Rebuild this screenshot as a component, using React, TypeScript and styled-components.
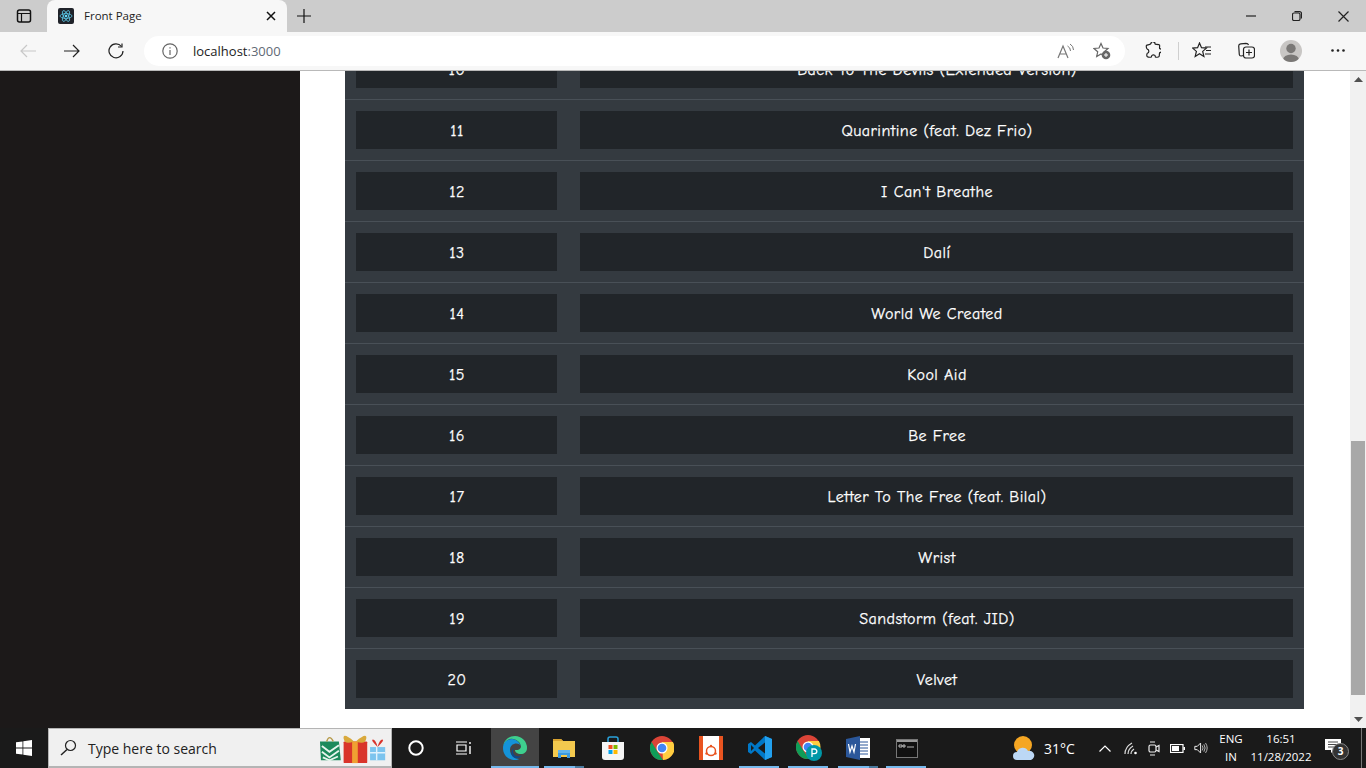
import React from "react";
import styled, { createGlobalStyle } from "styled-components";

const Global = createGlobalStyle`
  html, body { margin: 0; padding: 0; height: 768px; overflow: hidden; background: #fff; }
  * { box-sizing: border-box; }
  svg { display: block; }
`;
const UI = `"Open Sans", "Noto Sans", sans-serif`;
const TRACK = `"Comic Sans MS", "Comic Neue", Lato, sans-serif`;

const Screen = styled.div`width:1366px;height:768px;display:flex;flex-direction:column;overflow:hidden;`;
const TabStrip = styled.div`height:32px;background:#ccc;display:flex;align-items:stretch;flex:none;`;
const SideBtn = styled.div`width:47px;display:flex;align-items:center;justify-content:center;`;
const Tab = styled.div`width:240px;background:#f7f7f7;border-radius:8px 8px 0 0;display:flex;align-items:center;padding:0 11px;font:11.5px ${UI};color:#1e1e1e;`;
const Favicon = styled.div`width:16px;height:16px;background:#20232a;border-radius:2px;display:flex;align-items:center;justify-content:center;margin-right:10px;`;
const TabTitle = styled.span`flex:1;margin-top:-2px;`;
const NewTab = styled.div`width:34px;display:flex;align-items:center;justify-content:center;`;
const Spacer = styled.div`flex:1;`;
const WinBtn = styled.div`width:46px;display:flex;align-items:center;justify-content:center;`;
const Toolbar = styled.div`height:39px;background:#f7f7f7;border-bottom:1px solid #b9b9b9;display:flex;align-items:center;flex:none;padding-left:6px;padding-bottom:1px;`;
const NavBtn = styled.div`width:44px;height:32px;display:flex;align-items:center;justify-content:center;`;
const Pill = styled.div`margin-left:6px;width:981px;height:30px;background:#fff;border-radius:15px;display:flex;align-items:center;padding:0 5px 0 18px;`;
const Url = styled.span`margin-left:15px;font:13px ${UI};color:#222;flex:1;`;
const UrlPort = styled.span`color:#5f6a75;`;
const PillBtn = styled.div`width:36px;display:flex;justify-content:center;`;
const TBtn = styled.div<{ $w: number; $mr?: number; $ml?: number }>`width:${p => p.$w}px;margin-right:${p => p.$mr ?? 0}px;margin-left:${p => p.$ml ?? 0}px;display:flex;align-items:center;justify-content:center;`;
const Divider = styled.div`width:1px;height:18px;background:#cfcfcf;margin:0 10px 0 11px;`;
const Avatar = styled.div`width:22px;height:22px;border-radius:50%;background:#c8c6c4;overflow:hidden;`;

const Viewport = styled.div`height:657px;display:flex;flex:none;overflow:hidden;`;
const LeftPane = styled.div`width:300px;background:#1c1919;flex:none;`;
const Main = styled.main`width:1050px;background:#fff;padding-left:45px;flex:none;`;
const Table = styled.div`width:959px;background:#343a40;margin-top:-33px;`;
const Row = styled.div`height:61px;border-top:1px solid #495057;padding:11px 11px;display:grid;grid-template-columns:201px 713px;column-gap:23px;`;
const Cell = styled.div`height:38px;background:#212529;color:#fff;display:flex;align-items:center;justify-content:center;font:16px ${TRACK};letter-spacing:.45px;padding:2px 0 0 1px;-webkit-text-stroke:.25px #fff;`;
const Scrollbar = styled.div`width:16px;background:#f1f1f1;display:flex;flex-direction:column;align-items:center;flex:none;`;
const ScrollArrow = styled.div`height:17px;flex:none;display:flex;align-items:center;justify-content:center;`;
const Thumb = styled.div`width:14px;height:254px;background:#a8a8a8;margin-top:353px;flex:none;`;

const Taskbar = styled.div`height:40px;background:#1a1a1a;display:flex;align-items:stretch;flex:none;color:#fff;font-family:${UI};`;
const Start = styled.div`width:48px;flex:none;display:flex;align-items:center;justify-content:center;`;
const Search = styled.div`width:344px;flex:none;background:#f0f0f0;border:1px solid #b4b4b4;border-bottom-width:2px;display:flex;align-items:center;padding:0 3px 0 11px;font-size:14px;color:#222;`;
const SearchText = styled.span`margin:2px 0 0 11px;flex:1;`;
const Slot = styled.div<{ $w?: number; $active?: boolean }>`width:${p => p.$w ?? 49}px;position:relative;display:flex;align-items:center;justify-content:center;background:${p => (p.$active ? "#444" : "transparent")};flex:none;`;
const TaskView = styled(Slot)`padding-right:5px;`;
const Under = styled.div<{ $w: number; $extra?: number; $l?: number }>`position:absolute;bottom:0;left:${p => p.$l ?? 4}px;width:${p => p.$w}px;height:2px;background:#76b9ed;box-shadow:${p => (p.$extra ? `${p.$extra}px 0 0 #4a7a9e` : "none")};`;
const Temp = styled.span`font-size:14px;margin-left:8px;`;
const Weather = styled.div`margin-left:81px;width:83px;flex:none;display:flex;align-items:center;`;
const TrayIcon = styled.div<{ $w: number }>`width:${p => p.$w}px;display:flex;align-items:center;justify-content:center;flex:none;`;
const TwoLine = styled.div<{ $w: number }>`width:${p => p.$w}px;flex:none;display:flex;flex-direction:column;align-items:center;justify-content:center;font-size:11.5px;line-height:18px;white-space:nowrap;`;
const Notif = styled.div`width:45px;position:relative;display:flex;align-items:center;justify-content:center;flex:none;`;
const NotifBell = styled.svg`margin:-3px 0 0 5px;`;
const NotifBadge = styled.div`position:absolute;left:24px;top:15px;width:17px;height:17px;border-radius:50%;background:#333;border:1px solid #888;font:bold 10px/15px ${UI};text-align:center;`;
const ShowDesk = styled.div`width:1px;background:#777;margin-left:8px;flex:none;`;

const tracks: [number, string][] = [
  [10, "Back To The Devils (Extended Version)"],
  [11, "Quarintine (feat. Dez Frio)"],
  [12, "I Can't Breathe"],
  [13, "Dalí"],
  [14, "World We Created"],
  [15, "Kool Aid"],
  [16, "Be Free"],
  [17, "Letter To The Free (feat. Bilal)"],
  [18, "Wrist"],
  [19, "Sandstorm (feat. JID)"],
  [20, "Velvet"],
];

const S = { fill: "none", stroke: "currentColor", strokeWidth: 1.2 } as const;

export default function App() {
  return (
    <Screen>
      <Global />
      <TabStrip>
        <SideBtn>
          <svg width="16" height="16" viewBox="0 0 16 16" color="#111"><rect x="1.5" y="2" width="13" height="12" rx="2" {...S} strokeWidth="1.5" /><path d="M2 5.5h12M5.5 5.5V14" {...S} /></svg>
        </SideBtn>
        <Tab>
          <Favicon>
            <svg width="14" height="14" viewBox="0 0 14 14"><circle cx="7" cy="7" r="1.3" fill="#61dafb" /><g fill="none" stroke="#61dafb" strokeWidth=".7"><ellipse cx="7" cy="7" rx="6" ry="2.4" /><ellipse cx="7" cy="7" rx="6" ry="2.4" transform="rotate(60 7 7)" /><ellipse cx="7" cy="7" rx="6" ry="2.4" transform="rotate(120 7 7)" /></g></svg>
          </Favicon>
          <TabTitle>Front Page</TabTitle>
          <svg width="10" height="10" viewBox="0 0 10 10" color="#111"><path d="M1 1l8 8M9 1l-8 8" {...S} strokeWidth="1.5" /></svg>
        </Tab>
        <NewTab>
          <svg width="14" height="14" viewBox="0 0 14 14" color="#111"><path d="M7 0v14M0 7h14" {...S} /></svg>
        </NewTab>
        <Spacer />
        <WinBtn><svg width="10" height="2" viewBox="0 0 10 2" color="#222"><path d="M0 1h10" {...S} /></svg></WinBtn>
        <WinBtn><svg width="10" height="10" viewBox="0 0 10 10" color="#222"><rect x=".5" y="2" width="7.5" height="7.5" rx="1.5" {...S} /><path d="M2.5 .6h5a2 2 0 0 1 2 2v5" {...S} /></svg></WinBtn>
        <WinBtn><svg width="11" height="11" viewBox="0 0 11 11" color="#222"><path d="M.5.5l10 10M10.5.5l-10 10" {...S} /></svg></WinBtn>
      </TabStrip>
      <Toolbar>
        <NavBtn><svg width="16" height="14" viewBox="0 0 16 14" color="#c8c8c8"><path d="M16 7H1M7 1L1 7l6 6" {...S} /></svg></NavBtn>
        <NavBtn><svg width="16" height="14" viewBox="0 0 16 14" color="#222"><path d="M0 7h15M9 1l6 6-6 6" {...S} /></svg></NavBtn>
        <NavBtn><svg width="16" height="16" viewBox="0 0 16 16" color="#222"><path d="M13.5 3.5A7 7 0 1 0 15 8" {...S} /><path d="M14 .5v3.5h-4" {...S} /></svg></NavBtn>
        <Pill>
          <svg width="16" height="16" viewBox="0 0 16 16" color="#666"><circle cx="8" cy="8" r="7.2" {...S} /><path d="M8 7v5M8 4.2v1.3" {...S} /></svg>
          <Url>localhost<UrlPort>:3000</UrlPort></Url>
          <PillBtn>
            <svg width="18" height="16" viewBox="0 0 18 16" color="#777"><path d="M1 15L6 3l5 12M3 11h6" {...S} /><path d="M10.500 3q3 1.500 3 5M13 1q3.500 2 3.500 6" {...S} strokeWidth="1" /></svg>
          </PillBtn>
          <PillBtn>
            <svg width="18" height="18" viewBox="0 0 18 18" color="#666"><path d="M8 1.500l2 4.500 5 .5-3.700 3.300 1 4.700L8 12l-4.300 2.500 1-4.700L1 6.500 6 6z" {...S} /><circle cx="13" cy="13" r="4.300" fill="#666" /><path d="M13 11v4M11 13h4" stroke="#fff" strokeWidth="1" /></svg>
          </PillBtn>
        </Pill>
        <TBtn $w={28} $ml={14}>
          <svg width="16" height="17" viewBox="0 0 16 17" color="#222"><path d="M6 1.500a2 2 0 0 1 4 .6c0 .6 4 0 4.500 1s-.4 3.300.2 3.600a2 2 0 0 1 0 4c-.6 0 0 3.300-.7 4s-3 .7-3.600.3a2 2 0 0 0-4-.2c-.4.600-3 .6-4 0s-.6-3-.1-3.500a2.200 2.200 0 0 0 0-4.200C1.500 7 1 4 1.500 3.300S5.500 3 6 1.500z" {...S} /></svg>
        </TBtn>
        <Divider />
        <TBtn $w={26} $mr={18}>
          <svg width="20" height="17" viewBox="0 0 20 17" color="#222"><path d="M7.500 1l2 4.700 5 .4-3.800 3.300 1.200 5L7.500 11.700 3.200 14.400l1.200-5L.6 6.100l5-.4z" {...S} /><path d="M13 5h6M14 8.500h5M13 12h6" {...S} /></svg>
        </TBtn>
        <TBtn $w={26} $mr={21}>
          <svg width="17" height="17" viewBox="0 0 17 17" color="#222"><path d="M6 13.500L3 14Q1.500 14 1.300 12.500L.7 4q0-2 2-2.200L8 1.300q2 0 2.500 1.700" {...S} /><rect x="5.500" y="5" width="11" height="11" rx="2.500" {...S} /><path d="M11 7.500v6M8 10.500h6" {...S} /></svg>
        </TBtn>
        <TBtn $w={22} $mr={26}>
          <Avatar><svg width="22" height="22" viewBox="0 0 22 22"><circle cx="11" cy="8.500" r="4.700" fill="#7a7876" /><ellipse cx="11" cy="20" rx="8" ry="5.500" fill="#7a7876" /></svg></Avatar>
        </TBtn>
        <TBtn $w={20}>
          <svg width="14" height="3" viewBox="0 0 14 3" fill="#222"><circle cx="1.500" cy="1.500" r="1.300" /><circle cx="7" cy="1.500" r="1.300" /><circle cx="12.500" cy="1.500" r="1.300" /></svg>
        </TBtn>
      </Toolbar>
      <Viewport>
        <LeftPane />
        <Main>
          <Table>
            {tracks.map(([n, t]) => (
              <Row key={n}>
                <Cell>{n}</Cell>
                <Cell>{t}</Cell>
              </Row>
            ))}
          </Table>
        </Main>
        <Scrollbar>
          <ScrollArrow><svg width="9" height="5" viewBox="0 0 9 5" fill="#505050"><path d="M4.500 0L9 5H0z" /></svg></ScrollArrow>
          <Thumb />
          <Spacer />
          <ScrollArrow><svg width="9" height="5" viewBox="0 0 9 5" fill="#505050"><path d="M0 0h9L4.500 5z" /></svg></ScrollArrow>
        </Scrollbar>
      </Viewport>
      <Taskbar>
        <Start>
          <svg width="16" height="16" viewBox="0 0 16 16" fill="#fff"><path d="M0 2.300l6.500-.9v6.200H0zM7.300 1.300L16 0v7.600H7.300zM0 8.400h6.500v6.200L0 13.700zM7.300 8.400H16V16l-8.700-1.300z" /></svg>
        </Start>
        <Search>
          <svg width="17" height="17" viewBox="0 0 17 17" color="#222"><circle cx="10.500" cy="6.500" r="5" {...S} /><path d="M7 10.500L1 16" {...S} strokeWidth="1.500" /></svg>
          <SearchText>Type here to search</SearchText>
          <svg width="68" height="34" viewBox="0 0 72 34">
            <path d="M0 10h20l2 20H1z" fill="#1c8a5c" /><path d="M2 15l8 6 10-7M2 21l8 6 10-7M3 27l7 3 9-4" stroke="#e8f5ee" strokeWidth="2" fill="none" />
            <path d="M7 10q3-8 7 0" stroke="#b59a4a" strokeWidth="1.500" fill="none" />
            <rect x="25" y="10" width="25" height="23" fill="#d9342b" rx="1" /><rect x="34" y="10" width="6" height="23" fill="#f0a032" />
            <path d="M36 10Q24 0 25 7t11 3zM38 10q12-10 11-3t-11 3z" fill="#d9a93c" />
            <rect x="53" y="16" width="16" height="14" fill="#7cc4ee" /><path d="M60 16v14M53 22h16" stroke="#dff2fd" strokeWidth="1.500" /><path d="M61 16q-8-8-5-8t5 8q8-8 5-8t-5 8z" fill="#d9342b" />
          </svg>
        </Search>
        <Slot $w={48}><svg width="16" height="16" viewBox="0 0 16 16"><circle cx="8" cy="8" r="6.700" fill="none" stroke="#fff" strokeWidth="2" /></svg></Slot>
        <TaskView $w={51}><svg width="17" height="16" viewBox="0 0 17 16" color="#fff"><path d="M1 2h11M1 14h11M2 5h9v6H2z" {...S} /><path d="M15 2v2M15 6v8" {...S} strokeWidth="1.400" /></svg></TaskView>
        <Slot $w={48} $active>
          <svg width="24" height="24" viewBox="0 0 24 24"><path d="M12 0a12 12 0 0 1 12 12c0 4-3 6-6 6-4 0-6-2-6-4 0 0 5 1 6-3C18 6 12 2 7 3 3 4 0 8 0 12 0 5 5 0 12 0z" fill="#3ecf8e" /><path d="M0 12C0 6 5 3 9 3c4 0 7 3 9 7-1-2-4-3-7-2-4 1-5 6-3 10 1 2 4 5 8 5-1 .6-2 1-4 1C5 24 0 19 0 12z" fill="#1493d9" /><path d="M11 12c-2 3-1 7 2 8 3 1 5 0 6-1-1 2-4 4-7 3-4-1-5-8-1-10z" fill="#0c4a8c" /></svg>
          <Under $w={48} $l={0} />
        </Slot>
        <Slot>
          <svg width="22" height="20" viewBox="0 0 22 20"><path d="M0 1h8l2 2h12v16H0z" fill="#f3c94e" /><path d="M0 1h8l2 2H0z" fill="#d9a22f" /><path d="M5 14h12v6h-3v-3H8v3H5z" fill="#3b9ae1" /><rect x="5" y="12" width="12" height="3" fill="#61b4ee" /></svg>
          <Under $w={31} $extra={9} $l={5} />
        </Slot>
        <Slot>
          <svg width="24" height="24" viewBox="0 0 24 24"><path d="M7 6V3q0-2 2-2h6q2 0 2 2v3" fill="none" stroke="#2aa3dc" strokeWidth="1.500" /><path d="M1 6h22v15q0 3-3 3H4q-3 0-3-3z" fill="#f5f5f5" /><rect x="7.500" y="9" width="4" height="4" fill="#f25022" /><rect x="12.500" y="9" width="4" height="4" fill="#7fba00" /><rect x="7.500" y="14" width="4" height="4" fill="#00a4ef" /><rect x="12.500" y="14" width="4" height="4" fill="#ffb900" /></svg>
        </Slot>
        <Slot>
          <svg width="24" height="24" viewBox="0 0 24 24"><circle cx="12" cy="12" r="12" fill="#db4437" /><path d="M12 6h10.900A12 12 0 0 1 13 24z" fill="#ffcd40" /><path d="M13 24A12 12 0 0 1 1.600 6L7 15l6 9z" fill="#0f9d58" /><circle cx="12" cy="12" r="5.500" fill="#fff" /><circle cx="12" cy="12" r="4.300" fill="#4285f4" /></svg>
        </Slot>
        <Slot>
          <svg width="24" height="24" viewBox="0 0 24 24"><rect width="24" height="24" fill="#fff" /><rect width="4" height="24" fill="#e95420" /><rect x="20" width="4" height="24" fill="#e95420" /><circle cx="12" cy="15" r="4.500" fill="none" stroke="#e95420" strokeWidth="1.500" /><circle cx="12" cy="10" r="1.200" fill="#e95420" /><circle cx="7.500" cy="17.500" r="1.200" fill="#e95420" /><circle cx="16.500" cy="17.500" r="1.200" fill="#e95420" /></svg>
        </Slot>
        <Slot>
          <svg width="24" height="24" viewBox="0 0 24 24"><path d="M17 0l7 3v18l-7 3L7 14.500 3 18l-3-2v-8l3-2 4 3.500z" fill="#0078c8" /><path d="M17 0l7 3v18l-7 3z" fill="#22a0ee" /><path d="M17 6.500L10 12l7 5.500z" fill="#1a1a1a" /><path d="M3 9v6l3-3z" fill="#1a1a1a" /></svg>
          <Under $w={40} $l={4} />
        </Slot>
        <Slot>
          <svg width="26" height="26" viewBox="0 0 26 26"><circle cx="12" cy="12" r="12" fill="#db4437" /><path d="M12 6h10.900A12 12 0 0 1 13 24z" fill="#ffcd40" /><path d="M13 24A12 12 0 0 1 1.600 6L7 15l6 9z" fill="#0f9d58" /><circle cx="12" cy="12" r="5.500" fill="#fff" /><circle cx="12" cy="12" r="4.300" fill="#4285f4" /><circle cx="18" cy="18" r="8" fill="#0097a7" /><path d="M16 22v-8h2.500a2.300 2.300 0 0 1 0 4.700H16" fill="none" stroke="#fff" strokeWidth="1.300" /></svg>
          <Under $w={40} $l={4} />
        </Slot>
        <Slot>
          <svg width="24" height="24" viewBox="0 0 24 24"><rect x="8" y="2" width="16" height="20" fill="#fff" /><path d="M13 6h9M13 9h9M13 12h9M13 15h9M13 18h9" stroke="#2b579a" /><path d="M0 3l14-3v24L0 21z" fill="#2b579a" /><path d="M2.500 8l1.500 8 2-6 2 6 1.500-8" fill="none" stroke="#fff" strokeWidth="1.200" /></svg>
          <Under $w={31} $extra={9} $l={5} />
        </Slot>
        <Slot>
          <svg width="22" height="19" viewBox="0 0 22 19"><rect x=".5" y=".5" width="21" height="18" fill="#111" stroke="#777" /><rect x="1" y="1" width="20" height="2" fill="#999" /><path d="M3 6h3v2H3zM7 6h2v2H7zM11 8h7" stroke="#ddd" strokeWidth=".8" fill="none" /></svg>
          <Under $w={40} $l={4} />
        </Slot>
        <Weather>
          <svg width="24" height="24" viewBox="0 0 24 24"><circle cx="11" cy="9" r="9" fill="#f5a623" /><path d="M5 24a4 4 0 0 1 0-8 6 6 0 0 1 11-1 4.500 4.500 0 0 1 3 9z" fill="#bcd8f5" /></svg>
          <Temp>31°C</Temp>
        </Weather>
        <TrayIcon $w={20}><svg width="12" height="7" viewBox="0 0 12 7" color="#fff"><path d="M.5 6.500L6 1l5.500 5.500" {...S} /></svg></TrayIcon>
        <TrayIcon $w={31}><svg width="14" height="14" viewBox="0 0 14 14" color="#ddd"><path d="M1 13q0-7 7-11M4 13q0-5 5-8M7 13q0-3 3-5" {...S} /><circle cx="11.500" cy="12" r="1.300" fill="#fff" /></svg></TrayIcon>
        <TrayIcon $w={14}><svg width="13" height="16" viewBox="0 0 13 16" color="#eee"><rect x="2" y="5" width="7" height="7" rx="1.500" {...S} /><path d="M9 7l3-1.500v6L9 10M3 2h5M3 15h5" {...S} /></svg></TrayIcon>
        <TrayIcon $w={34}><svg width="15" height="9" viewBox="0 0 15 9" color="#fff"><rect x=".5" y=".5" width="12.500" height="8" {...S} /><rect x="2" y="2" width="7" height="5" fill="#fff" /><rect x="13.500" y="3" width="1.500" height="3" fill="#fff" /></svg></TrayIcon>
        <TrayIcon $w={14}><svg width="17" height="14" viewBox="0 0 17 14" color="#eee"><path d="M1 5h3l4-4v12L4 9H1z" {...S} /><path d="M10 4q2 3 0 6M12 2.500q3 4.500 0 9M14 1q4 6 0 12" {...S} strokeWidth=".9" /></svg></TrayIcon>
        <TwoLine $w={46}><span>ENG</span><span>IN</span></TwoLine>
        <TwoLine $w={54}><span>16:51</span><span>11/28/2022</span></TwoLine>
        <Notif>
          <NotifBell width="16" height="15" viewBox="0 0 16 15" fill="#fff"><path d="M0 0h16v11H9l-3 3v-3H0z" /><path d="M3 3h10M3 5.500h10M3 8h7" stroke="#1a1a1a" strokeWidth=".8" /></NotifBell>
          <NotifBadge>3</NotifBadge>
        </Notif>
        <ShowDesk />
      </Taskbar>
    </Screen>
  );
}
